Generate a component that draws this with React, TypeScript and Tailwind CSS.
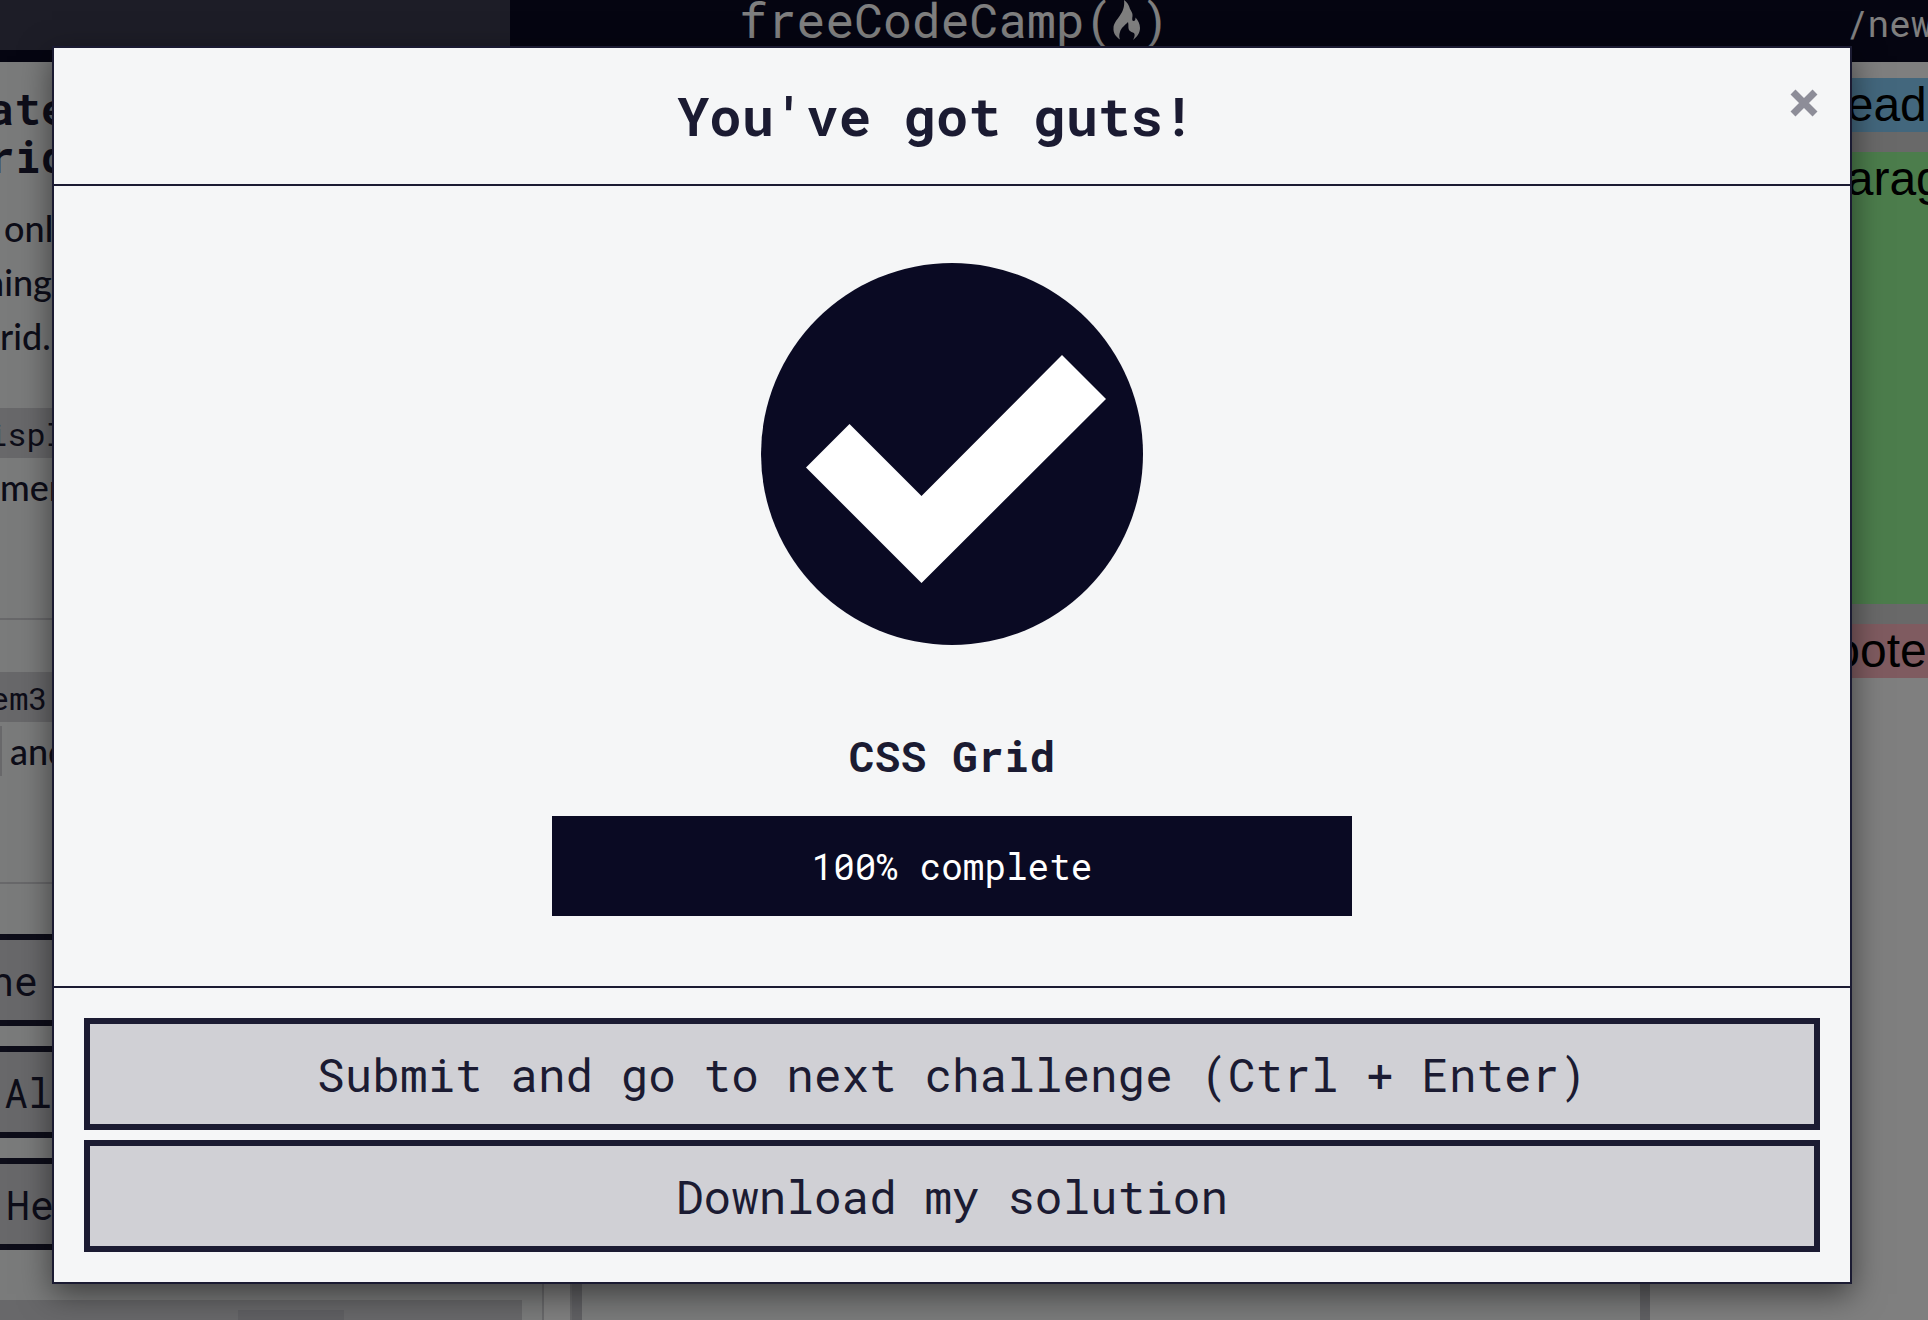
import React from "react";

const mono = "font-['Roboto_Mono','DejaVu_Sans_Mono',monospace]";

function Logo() {
  return (
    <a href="#" className={`${mono} flex items-center text-[48px] font-normal leading-[48px] text-white`} aria-label="freeCodeCamp">
      <span>freeCodeCamp(</span>
      <svg viewBox="0 0 27 40" className="h-10 w-[27px]" fill="currentColor" aria-hidden="true">
        <path d="M11 0C14 2 16 5 17 9C18 11 20 13 19.500 16C19 19 19 21 20.500 21C22 21 22.500 20 22.500 17.500C25 20 27 24 27 28C27 33 24 37 20 40C21 38 22 36 21.500 34C21 32 19 33 17 31C14.500 29 16 26 15 22C12 25 8 28 7 32C6 35 6 37 7 39.500C3 37 0 33 0.500 28C1 19 13 14 11 0Z" />
      </svg>
      <span>)</span>
    </a>
  );
}

function Header() {
  return (
    <header className="flex h-[62px] items-start overflow-hidden bg-[#0a0a23]">
      <div className="h-[50px] w-[510px] shrink-0 bg-[#3b3b4f]" />
      <div className="-mt-1 ml-[229px] flex-1"><Logo /></div>
      <nav className={`${mono} w-[82px] shrink-0 overflow-hidden whitespace-nowrap text-[36px] leading-[46px] text-white`}>
        <a href="#">/news</a>
      </nav>
    </header>
  );
}

function ToolButton({ className, children }: { className: string; children: React.ReactNode }) {
  return (
    <button type="button" className="h-[92px] border-y-6 border-[#1b1b32] bg-[#d0d0d5] pt-[2px] text-left">
      <span className={className}>{children}</span>
    </button>
  );
}

function Instructions() {
  return (
    <section className="w-[544px] shrink-0 overflow-hidden border-r-2 border-[#d0d0d5] bg-[#f5f6f7] font-['Lato',sans-serif] text-[36px] leading-[54px] text-[#1b1b32]">
      <h1 className={`${mono} -ml-3 pt-[22px] text-[44px] font-bold leading-[48px]`}>ate<br />rid</h1>
      <div className="mt-[21px] font-medium">
        <p className="ml-1">only</p>
        <p className="-ml-4">ning</p>
        <p>rid.</p>
      </div>
      <div className="mt-[45px] font-medium">
        <p className={`${mono} h-[50px] bg-[#d0d0d5] text-[32px] font-normal leading-[52px]`}><code className="-ml-3 font-[inherit]">isplay</code></p>
        <p className="mt-[2px] h-[52px]">ment</p>
      </div>
      <hr className="mt-[106px] border-t-2 border-[#d0d0d5]" />
      <div className="mt-[52px] font-medium">
        <p className={`${mono} h-[50px] bg-[#d0d0d5] text-[32px] font-normal leading-[52px]`}><code className="-ml-2.5 font-[inherit]">em3</code></p>
        <p className="mt-1 h-[50px] border-l-2 border-[#d0d0d5] pl-2 leading-[50px]">and</p>
      </div>
      <hr className="mt-[106px] border-t-2 border-[#d0d0d5]" />
      <div className={`${mono} mt-[50px] flex flex-col gap-5 text-[40px]`}>
        <ToolButton className="-ml-2.5">ne</ToolButton>
        <ToolButton className="ml-1">All</ToolButton>
        <ToolButton className="ml-1.5">Help</ToolButton>
      </div>
      <div className="mt-[50px] h-5 w-[522px] bg-[#d0d0d5] pl-[238px] pt-[10px]">
        <div className="h-[10px] w-[106px] bg-[#c0c0c6]" />
      </div>
    </section>
  );
}

function Preview() {
  return (
    <section className="flex-1 overflow-hidden bg-white pt-4 font-['Liberation_Sans',Arial,sans-serif] text-[48px] leading-[54px] text-black">
      <div className="grid gap-5 bg-[#d3d3d3]">
        <div className="bg-[#87cefa] pl-[170px]">header</div>
        <div className="h-[452px] bg-[#98fb98] pl-[170px]">paragraph</div>
        <div className="bg-[#ffb6c1] pl-[170px]">footer</div>
      </div>
    </section>
  );
}

function CompletionModal() {
  return (
    <div role="dialog" aria-modal="true" aria-labelledby="modal-title" className={`${mono} w-full border-2 border-[#1b1b32] bg-[#f5f6f7] text-[#1b1b32] shadow-[0_10px_30px_rgba(0,0,0,0.5)]`}>
      <header className="flex h-[138px] items-start border-b-2 border-[#1b1b32] px-[30px]">
        <h2 id="modal-title" className="flex-1 pt-8 text-center text-[54px] font-bold leading-[70px]">You've got guts!</h2>
        <button type="button" aria-label="Close" className="mt-[39px] flex size-8 items-center justify-center text-[#8d8d98]">
          <svg viewBox="0 0 28 28" className="size-7" stroke="currentColor" strokeWidth="7" aria-hidden="true">
            <path d="M3 3 25 25M25 3 3 25" />
          </svg>
        </button>
      </header>
      <div className="flex flex-col items-center pb-[70px] pt-[77px]">
        <svg viewBox="0 0 382 382" className="size-[382px]" aria-hidden="true">
          <circle cx="191" cy="191" r="191" fill="#0a0a23" />
          <path d="M45 204.500 88.500 161 160.500 233 301 92 345 136 160.500 320Z" fill="#fff" />
        </svg>
        <h3 className="mt-[81px] text-[43px] font-bold leading-[60px]">CSS Grid</h3>
        <div role="progressbar" aria-valuenow={100} aria-label="CSS Grid" className="mt-[30px] h-[100px] w-[800px] bg-[#0a0a23] text-center text-[36px] leading-[100px] text-white">100% complete</div>
      </div>
      <footer className="flex flex-col gap-[10px] border-t-2 border-[#1b1b32] p-[30px] text-[46px]">
        <button type="button" className="h-[112px] border-6 border-[#1b1b32] bg-[#d0d0d5]">Submit and go to next challenge (Ctrl + Enter)</button>
        <button type="button" className="h-[112px] border-6 border-[#1b1b32] bg-[#d0d0d5]">Download my solution</button>
      </footer>
    </div>
  );
}

export default function App() {
  return (
    <div className="relative h-screen overflow-hidden">
      <div className="flex h-full flex-col">
        <Header />
        <main className="flex min-h-0 flex-1">
          <Instructions />
          <div className="w-7 shrink-0 border-r-2 border-[#d0d0d5] bg-white" />
          <div className="w-[10px] shrink-0 bg-[#c0c0c6]" />
          <div className="w-[1058px] shrink-0 bg-[#f5f6f7]" />
          <div className="w-[10px] shrink-0 bg-[#c0c0c6]" />
          <Preview />
        </main>
      </div>
      <div className="absolute inset-0 bg-black/50 pl-[52px] pr-[76px] pt-[46px]">
        <CompletionModal />
      </div>
    </div>
  );
}
